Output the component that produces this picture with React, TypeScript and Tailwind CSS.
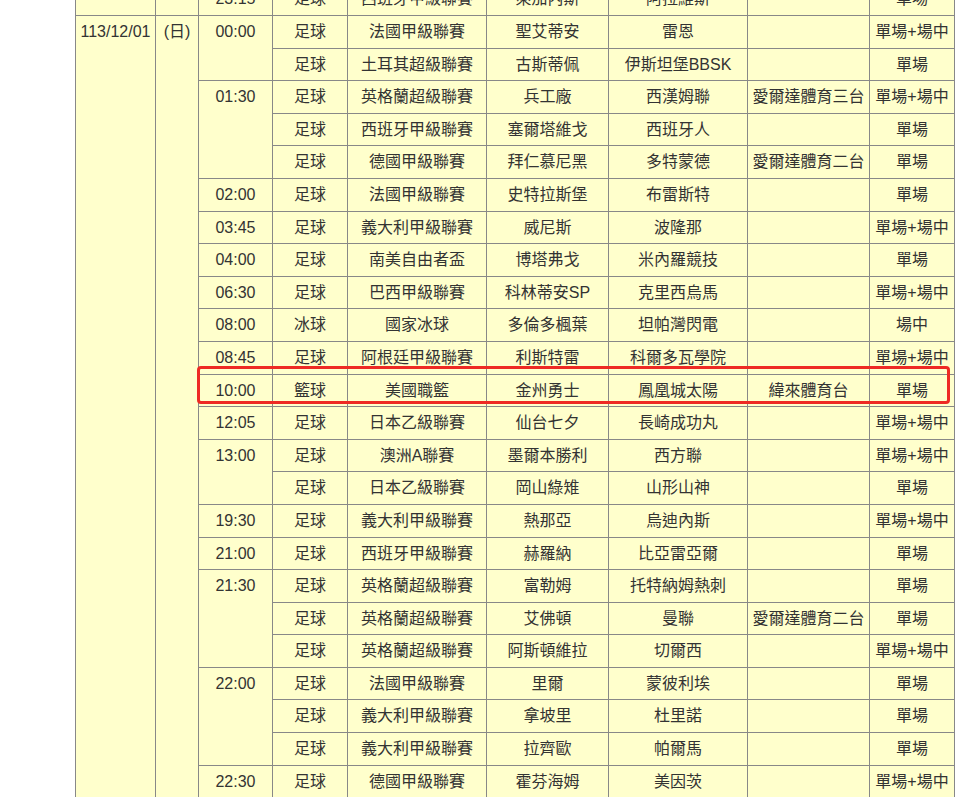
type Match = {
  time?: string;
  span?: number;
  sport: string;
  league: string;
  home: string;
  away: string;
  channel: string;
  kind: string;
  mark?: boolean;
};

const MATCHES: Match[] = [
  { time: "00:00", span: 2, sport: "足球", league: "法國甲級聯賽", home: "聖艾蒂安", away: "雷恩", channel: "", kind: "單場+場中" },
  { sport: "足球", league: "土耳其超級聯賽", home: "古斯蒂佩", away: "伊斯坦堡BBSK", channel: "", kind: "單場" },
  { time: "01:30", span: 3, sport: "足球", league: "英格蘭超級聯賽", home: "兵工廠", away: "西漢姆聯", channel: "愛爾達體育三台", kind: "單場+場中" },
  { sport: "足球", league: "西班牙甲級聯賽", home: "塞爾塔維戈", away: "西班牙人", channel: "", kind: "單場" },
  { sport: "足球", league: "德國甲級聯賽", home: "拜仁慕尼黑", away: "多特蒙德", channel: "愛爾達體育二台", kind: "單場" },
  { time: "02:00", sport: "足球", league: "法國甲級聯賽", home: "史特拉斯堡", away: "布雷斯特", channel: "", kind: "單場" },
  { time: "03:45", sport: "足球", league: "義大利甲級聯賽", home: "威尼斯", away: "波隆那", channel: "", kind: "單場+場中" },
  { time: "04:00", sport: "足球", league: "南美自由者盃", home: "博塔弗戈", away: "米內羅競技", channel: "", kind: "單場" },
  { time: "06:30", sport: "足球", league: "巴西甲級聯賽", home: "科林蒂安SP", away: "克里西烏馬", channel: "", kind: "單場+場中" },
  { time: "08:00", sport: "冰球", league: "國家冰球", home: "多倫多楓葉", away: "坦帕灣閃電", channel: "", kind: "場中" },
  { time: "08:45", sport: "足球", league: "阿根廷甲級聯賽", home: "利斯特雷", away: "科爾多瓦學院", channel: "", kind: "單場+場中" },
  { time: "10:00", sport: "籃球", league: "美國職籃", home: "金州勇士", away: "鳳凰城太陽", channel: "緯來體育台", kind: "單場", mark: true },
  { time: "12:05", sport: "足球", league: "日本乙級聯賽", home: "仙台七夕", away: "長崎成功丸", channel: "", kind: "單場+場中" },
  { time: "13:00", span: 2, sport: "足球", league: "澳洲A聯賽", home: "墨爾本勝利", away: "西方聯", channel: "", kind: "單場+場中" },
  { sport: "足球", league: "日本乙級聯賽", home: "岡山綠雉", away: "山形山神", channel: "", kind: "單場" },
  { time: "19:30", sport: "足球", league: "義大利甲級聯賽", home: "熱那亞", away: "烏迪內斯", channel: "", kind: "單場+場中" },
  { time: "21:00", sport: "足球", league: "西班牙甲級聯賽", home: "赫羅納", away: "比亞雷亞爾", channel: "", kind: "單場" },
  { time: "21:30", span: 3, sport: "足球", league: "英格蘭超級聯賽", home: "富勒姆", away: "托特納姆熱刺", channel: "", kind: "單場" },
  { sport: "足球", league: "英格蘭超級聯賽", home: "艾佛頓", away: "曼聯", channel: "愛爾達體育二台", kind: "單場" },
  { sport: "足球", league: "英格蘭超級聯賽", home: "阿斯頓維拉", away: "切爾西", channel: "", kind: "單場+場中" },
  { time: "22:00", span: 3, sport: "足球", league: "法國甲級聯賽", home: "里爾", away: "蒙彼利埃", channel: "", kind: "單場" },
  { sport: "足球", league: "義大利甲級聯賽", home: "拿坡里", away: "杜里諾", channel: "", kind: "單場" },
  { sport: "足球", league: "義大利甲級聯賽", home: "拉齊歐", away: "帕爾馬", channel: "", kind: "單場" },
  { time: "22:30", sport: "足球", league: "德國甲級聯賽", home: "霍芬海姆", away: "美因茨", channel: "", kind: "單場+場中" },
];

const td = "border border-[#888] px-[2px] pt-[6px] align-top text-center whitespace-nowrap";

export default function App() {
  return (
    <div
      className="h-screen overflow-hidden bg-white text-[16px] leading-[20px] text-[#333]"
      style={{ fontFamily: '"Liberation Sans", Arial, "Noto Sans CJK TC", sans-serif' }}
    >
      <div className="relative ml-[75px] mt-[-17.6px] w-[879px]">
        <table className="w-[879px] table-fixed border-collapse border border-[#333] bg-[#ffffcc]">
          <colgroup>
            <col className="w-[80px]" />
            <col className="w-[43px]" />
            <col className="w-[74px]" />
            <col className="w-[75px]" />
            <col className="w-[139px]" />
            <col className="w-[122px]" />
            <col className="w-[139px]" />
            <col className="w-[122px]" />
            <col className="w-[85px]" />
          </colgroup>
          <tbody>
            {/* last row of the previous day, mostly scrolled out of view */}
            <tr className="h-[32.6px]">
              <td className={td}></td>
              <td className={td}></td>
              <td className={td}>23:15</td>
              <td className={td}>足球</td>
              <td className={td}>西班牙甲級聯賽</td>
              <td className={td}>萊加內斯</td>
              <td className={td}>阿拉維斯</td>
              <td className={td}></td>
              <td className={td}>單場</td>
            </tr>
            {MATCHES.map((m, i) => (
              <tr key={i} className="h-[32.6px]">
                {i === 0 && (
                  <>
                    <td rowSpan={MATCHES.length} className={td}>113/12/01</td>
                    <td rowSpan={MATCHES.length} className={td}>(日)</td>
                  </>
                )}
                {m.time && (
                  <td rowSpan={m.span ?? 1} className={td}>
                    {m.time}
                  </td>
                )}
                <td className={td}>{m.sport}</td>
                <td className={td}>{m.league}</td>
                <td className={td}>{m.home}</td>
                <td className={td}>{m.away}</td>
                <td className={td}>{m.channel}</td>
                <td className={td}>{m.kind}</td>
              </tr>
            ))}
          </tbody>
        </table>
        {/* highlight around the basketball game */}
        <div className="pointer-events-none absolute left-[122px] top-[384px] h-[38px] w-[753px] rounded-[4px] border-[3px] border-[#ee2a24]" />
      </div>
    </div>
  );
}
